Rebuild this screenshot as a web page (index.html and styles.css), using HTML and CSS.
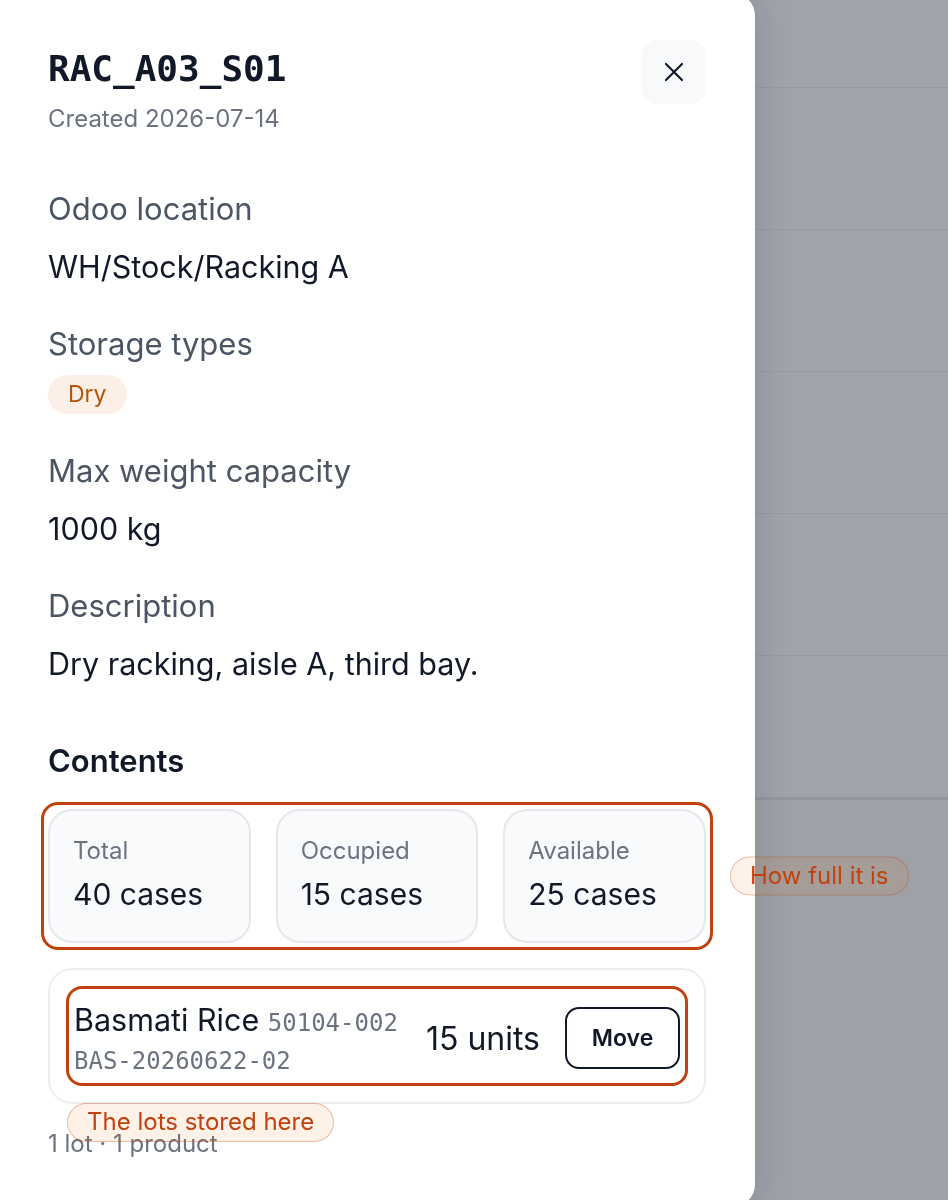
FILE: index.html
```html
<!DOCTYPE html>
<html lang="en">
<head>
    <meta charset="UTF-8">
    <meta name="viewport" content="width=device-width, initial-scale=1.0">
    <title>RAC_A03_S01</title>
    <link rel="stylesheet" href="styles.css">
</head>
<body>

<!-- Page behind the drawer (dimmed) -->
<div class="page">
    <div class="table-head"></div>
    <div class="table-row"></div>
    <div class="table-row"></div>
    <div class="table-row"></div>
    <div class="table-row"></div>
    <div class="table-row"></div>
</div>

<!-- Location drawer -->
<aside class="drawer">
    <div class="drawer-header">
        <div class="title-block">
            <h1 class="location-code">RAC_A03_S01</h1>
            <p class="created">Created 2026-07-14</p>
        </div>
        <button class="close-button" aria-label="Close">
            <svg width="24" height="24" viewBox="0 0 24 24" fill="none" stroke="#111827" stroke-width="2.2" stroke-linecap="round">
                <path d="M4 4L20 20M20 4L4 20"/>
            </svg>
        </button>
    </div>

    <div class="field">
        <div class="field-label">Odoo location</div>
        <div class="field-value">WH/Stock/Racking A</div>
    </div>

    <div class="field">
        <div class="field-label">Storage types</div>
        <div class="tags">
            <span class="tag">Dry</span>
        </div>
    </div>

    <div class="field">
        <div class="field-label">Max weight capacity</div>
        <div class="field-value">1000 kg</div>
    </div>

    <div class="field">
        <div class="field-label">Description</div>
        <div class="field-value">Dry racking, aisle A, third bay.</div>
    </div>

    <!-- Contents of the location -->
    <section class="contents">
        <h2>Contents</h2>

        <div class="stats highlighted">
            <div class="stat-card">
                <div class="stat-label">Total</div>
                <div class="stat-value">40 cases</div>
            </div>
            <div class="stat-card">
                <div class="stat-label">Occupied</div>
                <div class="stat-value">15 cases</div>
            </div>
            <div class="stat-card">
                <div class="stat-label">Available</div>
                <div class="stat-value">25 cases</div>
            </div>
            <span class="note note-side">How full it is</span>
        </div>

        <div class="lot-list">
            <div class="lot-row highlighted">
                <div class="lot-info">
                    <div class="lot-product">Basmati Rice <span class="code">50104-002</span></div>
                    <div class="lot-number code">BAS-20260622-02</div>
                </div>
                <div class="lot-qty">15 units</div>
                <button class="move-button">Move</button>
                <span class="note note-below">The lots stored here</span>
            </div>
        </div>

        <p class="summary">1 lot · 1 product</p>
    </section>
</aside>

</body>
</html>
```

FILE: styles.css
```css
body {
    margin: 0;
    height: 1200px;
    overflow: hidden;
    font-family: Inter, "Noto Sans", sans-serif;
    color: #111827;
    background-color: #9ea1a8;
}

/* dimmed table behind the drawer */
.table-head {
    height: 87px;
    background-color: #a0a3ab;
    border-bottom: 1px solid #969aa1;
}
.table-row {
    height: 141px;
    background-color: #a0a3ab;
    border-bottom: 1px solid #969aa1;
}
.table-row:last-child {
    border-bottom: 3px solid #93969e;
}

.drawer {
    position: fixed;
    top: -8px;
    bottom: -8px;
    left: 0;
    display: flex;
    flex-direction: column;
    width: 755px;
    box-sizing: border-box;
    padding: 48px 49px 0 48px;
    background-color: #fff;
    border-radius: 0 24px 24px 0;
    box-shadow: 0 0 36px rgba(17, 24, 39, 0.16);
}

.drawer-header {
    display: flex;
    justify-content: space-between;
    align-items: flex-start;
    margin-bottom: 55px;
}
.title-block {
    padding-top: 7px;
}
.location-code {
    margin: 0;
    font-family: "DejaVu Sans Mono", monospace;
    font-size: 36px;
    line-height: 44px;
    font-weight: 700;
}
.created {
    margin: 13px 0 0;
    font-size: 24px;
    line-height: 30px;
    color: #6b7280;
}
.close-button {
    display: flex;
    align-items: center;
    justify-content: center;
    width: 64px;
    height: 64px;
    padding: 0;
    border: none;
    border-radius: 16px;
    background-color: #f8f9fb;
    cursor: pointer;
}

.field + .field {
    margin-top: 37px;
}
.field-label {
    font-size: 31px;
    line-height: 40px;
    color: #4b5563;
}
.field-value {
    margin-top: 18px;
    font-size: 30.5px;
    line-height: 40px;
}
.field:first-of-type .field-value {
    margin-top: 17px;
}
.tags {
    display: flex;
    gap: 8px;
    margin-top: 11px;
}
.tag {
    height: 39px;
    padding: 0 20px;
    font-size: 23px;
    line-height: 39px;
    border-radius: 999px;
    color: #b45309;
    background-color: #fbefe7;
}

.contents {
    margin-top: 57px;
}
.contents h2 {
    margin: 0;
    font-size: 31px;
    line-height: 40px;
    font-weight: 600;
}

/* annotation outline */
.highlighted {
    outline: 3px solid #c2410c;
    outline-offset: 4px;
    border-radius: 10px;
}

.stats {
    position: relative;
    display: grid;
    grid-template-columns: repeat(3, 1fr);
    gap: 25px;
    margin-top: 28px;
}
.stat-card {
    padding: 25px 23px 27px;
    border: 2px solid #e5e7eb;
    border-radius: 24px;
    background-color: #f8fafc;
}
.stat-label {
    font-size: 24px;
    line-height: 30px;
    color: #6b7280;
}
.stat-value {
    margin-top: 8px;
    font-size: 30px;
    line-height: 40px;
}

.lot-list {
    margin-top: 25px;
    padding: 24px;
    border: 2px solid #eceef1;
    border-radius: 24px;
}
.lot-row {
    position: relative;
    display: flex;
    align-items: center;
    gap: 25px;
    padding: 6px 0 2px;
    outline-offset: 5px;
    border-radius: 8px;
}
.lot-info {
    flex: 1;
}
.lot-product {
    font-size: 30.5px;
    line-height: 40px;
}
.code {
    font-family: "DejaVu Sans Mono", monospace;
    font-size: 24px;
    color: #6b7280;
}
.lot-product .code {
    line-height: 1;
}
.lot-number {
    margin-top: 6px;
    line-height: 30px;
}
.lot-qty {
    font-size: 32px;
}
.move-button {
    width: 115px;
    height: 62px;
    border: 2px solid #111827;
    border-radius: 14px;
    background-color: #fff;
    font-family: inherit;
    font-size: 23px;
    font-weight: 600;
    color: #111827;
    cursor: pointer;
}

.summary {
    margin: 25px 0 0;
    font-size: 24px;
    line-height: 30px;
    color: #6b7280;
}

/* callout pills */
.note {
    position: absolute;
    z-index: 1;
    box-sizing: border-box;
    height: 39px;
    padding: 0 19px;
    white-space: nowrap;
    font-size: 24px;
    line-height: 36px;
    color: #c2410c;
    background-color: rgba(249, 115, 22, 0.1);
    border: 1.5px solid rgba(194, 65, 12, 0.3);
    border-radius: 999px;
}
.note-side {
    top: 50%;
    left: calc(100% + 24px);
    transform: translateY(-50%);
}
.note-below {
    top: calc(100% + 25px);
    left: -7px;
}
```
